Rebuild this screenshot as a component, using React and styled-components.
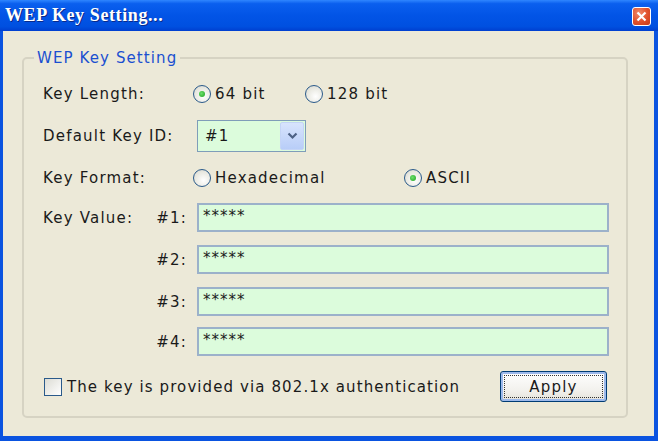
import React from 'react';
import styled, { createGlobalStyle } from 'styled-components';

const Global = createGlobalStyle`
  html, body { margin: 0; padding: 0; background: #ece9d8; }
  body { font-family: "DejaVu Sans", Verdana, sans-serif; }
`;

const Window = styled.div`
  width: 658px;
  height: 441px;
  display: flex;
  flex-direction: column;
  background: #0a53e0;
  box-sizing: border-box;
  overflow: hidden;
`;

const TitleBar = styled.div`
  height: 31px;
  flex: none;
  display: flex;
  align-items: center;
  justify-content: space-between;
  padding: 0 7px 0 5px;
  background: linear-gradient(#2f86ff 0%, #0a5fee 12%, #0254e6 50%, #0050e0 85%, #003fd0 100%);
`;

const Title = styled.div`
  color: #fff;
  font-family: "Liberation Serif", "Times New Roman", serif;
  font-weight: bold;
  font-size: 18px;
  letter-spacing: 0.6px;
  text-shadow: 1px 1px 0 #0a2a8a;
`;

const CloseBtn = styled.div`
  width: 17px;
  height: 17px;
  border: 1px solid #fff;
  border-radius: 3px;
  background: radial-gradient(circle at 35% 30%, #f08a6a, #e0502b 55%, #c83a18);
  display: flex;
  align-items: center;
  justify-content: center;
  margin-top: 2px;
`;

const Body = styled.div`
  flex: 1;
  margin: 0 4px 5px 3px;
  background: #ece9d8;
  padding: 18px 26px 18px 19px;
  box-sizing: border-box;
`;

const Group = styled.fieldset`
  margin: 0;
  height: 100%;
  box-sizing: border-box;
  border: 2px solid #d6d3c3;
  border-radius: 5px;
  padding: 12px 0 0 19px;
  display: flex;
  flex-direction: column;
`;

const Legend = styled.legend`
  color: #1a4fd0;
  font-size: 15px;
  letter-spacing: 1.1px;
  padding: 0 3px;
  margin-left: -9px;
`;

const Row = styled.div`
  display: flex;
  align-items: center;
  height: ${p => p.$h || 30}px;
  margin-top: ${p => p.$mt || 0}px;
  flex: none;
`;

const Label = styled.div`
  width: ${p => p.$w || 150}px;
  flex: none;
  font-size: 15px;
  letter-spacing: 1.2px;
  color: #1a1a1a;
`;

const SubLabel = styled.div`
  width: 150px;
  flex: none;
  padding-right: 6px;
  box-sizing: border-box;
  font-size: 15px;
  letter-spacing: 1.2px;
  color: #1a1a1a;
  display: flex;
  justify-content: space-between;
`;

const Option = styled.label`
  display: flex;
  align-items: center;
  width: ${p => p.$w}px;
  flex: none;
  font-size: 15px;
  letter-spacing: 1.2px;
  color: #1a1a1a;
  gap: 4px;
`;

const Radio = styled.span`
  width: 16px;
  height: 16px;
  border: 1px solid #2a5a8a;
  border-radius: 50%;
  background: radial-gradient(circle at 60% 65%, #ffffff, #e8e8e0 60%, #d0d0c8);
  display: flex;
  align-items: center;
  justify-content: center;
  flex: none;
  &::after {
    content: '';
    display: ${p => (p.$on ? 'block' : 'none')};
    width: 6px;
    height: 6px;
    border-radius: 50%;
    background: radial-gradient(circle at 40% 40%, #6be06b, #21a121);
  }
`;

const Select = styled.div`
  width: 105px;
  height: 28px;
  margin-left: 4px;
  border: 1px solid #7f9db9;
  background: #dcfcdc;
  display: flex;
  align-items: center;
  justify-content: space-between;
  padding: 1px;
  box-sizing: content-box;
  font-size: 15px;
  letter-spacing: 1.2px;
  color: #1a1a1a;
  span { padding-left: 6px; }
`;

const DropBtn = styled.div`
  width: 22px;
  height: 26px;
  border-radius: 2px;
  background: linear-gradient(#d8e4fd, #b8cdf8);
  border: 1px solid #c4d4f6;
  display: flex;
  align-items: center;
  justify-content: center;
`;

const KeyInput = styled.div`
  height: 25px;
  width: 400px;
  margin-left: 4px;
  border: 2px solid #9cb1ca;
  background: #dcfcdc;
  font-size: 15px;
  letter-spacing: 1px;
  color: #1a1a1a;
  padding: 0 4px;
  line-height: 22px;
  box-sizing: content-box;
`;

const Footer = styled.div`
  display: flex;
  align-items: center;
  justify-content: space-between;
  height: 31px;
  margin-top: 15px;
  padding-right: 19px;
  flex: none;
`;

const Check = styled.label`
  display: flex;
  align-items: center;
  gap: 5px;
  font-size: 15px;
  letter-spacing: 1.1px;
  color: #1a1a1a;
  margin-left: 1px;
`;

const Box = styled.span`
  width: 16px;
  height: 16px;
  border: 1px solid #2a5a8a;
  background: linear-gradient(135deg, #dcdcd4, #ffffff);
  flex: none;
`;

const Button = styled.div`
  width: 105px;
  height: 29px;
  border: 1px solid #003c74;
  border-radius: 3px;
  background: linear-gradient(#ffffff, #f3f2ee 60%, #e4e2da);
  box-shadow: inset 0 0 0 2px #9db9eb;
  display: flex;
  align-items: center;
  justify-content: center;
  font-size: 15px;
  letter-spacing: 1.2px;
  color: #1a1a1a;
  position: relative;
  &::after {
    content: '';
    position: absolute;
    inset: 3px;
    border: 1px dotted #333;
  }
`;

const keys = ['#1:', '#2:', '#3:', '#4:'];

export default function App() {
  return (
    <>
      <Global />
      <Window>
        <TitleBar>
          <Title>WEP Key Setting...</Title>
          <CloseBtn>
            <svg width="11" height="11" viewBox="0 0 11 11">
              <path d="M1.5 1.5 L9.5 9.5 M9.5 1.5 L1.5 9.5" stroke="#fff" strokeWidth="2.2" />
            </svg>
          </CloseBtn>
        </TitleBar>
        <Body>
          <Group>
            <Legend>WEP Key Setting</Legend>
            <Row>
              <Label>Key Length:</Label>
              <Option $w={112}><Radio $on />64 bit</Option>
              <Option $w={100}><Radio />128 bit</Option>
            </Row>
            <Row $mt={12}>
              <Label>Default Key ID:</Label>
              <Select>
                <span>#1</span>
                <DropBtn>
                  <svg width="11" height="8" viewBox="0 0 11 8">
                    <path d="M1.5 1.5 L5.5 5.5 L9.5 1.5" stroke="#4d6185" strokeWidth="2.2" fill="none" />
                  </svg>
                </DropBtn>
              </Select>
            </Row>
            <Row $mt={12}>
              <Label>Key Format:</Label>
              <Option $w={211}><Radio />Hexadecimal</Option>
              <Option $w={90}><Radio $on />ASCII</Option>
            </Row>
            {keys.map((k, i) => (
              <Row key={k} $h={29} $mt={i === 0 ? 10 : i === 3 ? 11 : 13}>
                <SubLabel>
                  <span>{i === 0 ? 'Key Value:' : ''}</span>
                  <span>{k}</span>
                </SubLabel>
                <KeyInput>*****</KeyInput>
              </Row>
            ))}
            <Footer>
              <Check><Box />The key is provided via 802.1x authentication</Check>
              <Button>Apply</Button>
            </Footer>
          </Group>
        </Body>
      </Window>
    </>
  );
}
